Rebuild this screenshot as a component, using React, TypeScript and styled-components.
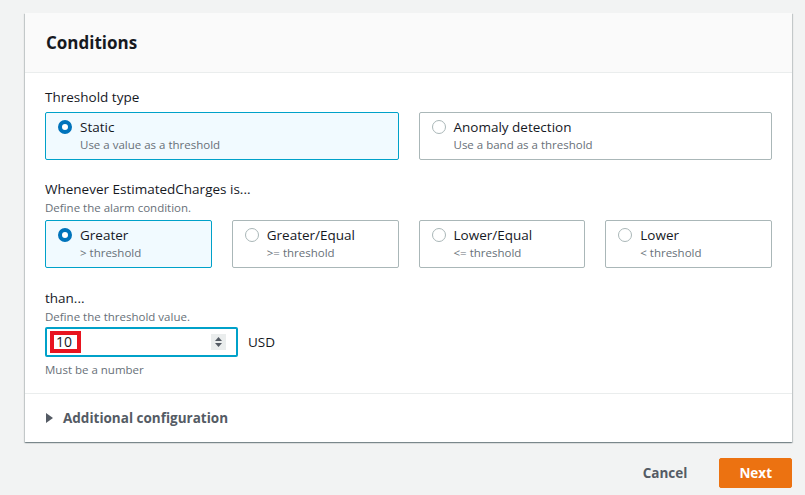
import React, { useState } from 'react';
import styled, { createGlobalStyle } from 'styled-components';

const GlobalStyle = createGlobalStyle`
  body {
    margin: 0;
    background: #f2f3f3;
    font-family: "Open Sans", "Noto Sans", sans-serif;
    color: #16191f;
  }
`;

const Page = styled.div`
  padding: 13px 13px 8px 25px;
`;

const Card = styled.div`
  background: #fff;
  box-shadow: 0 1px 1px 0 rgba(0, 28, 36, 0.3), 1px 1px 1px 0 rgba(0, 28, 36, 0.15),
    -1px 1px 1px 0 rgba(0, 28, 36, 0.15);
`;

const CardHeader = styled.div`
  height: 59px;
  display: flex;
  align-items: center;
  padding: 0 21px;
  background: #fafafa;
  border-bottom: 1px solid #eaeded;
`;

const Title = styled.h2`
  margin: 0;
  font-size: 17px;
  font-weight: 700;
`;

const CardBody = styled.div`
  padding: 13px 20px 15px;
  border-bottom: 1px solid #eaeded;
`;

const Field = styled.div<{ $gap?: number }>`
  margin-top: ${(p) => p.$gap ?? 0}px;
`;

const Label = styled.div`
  font-size: 13.5px;
  line-height: 22px;
`;

const Description = styled.div`
  font-size: 11.5px;
  line-height: 16px;
  color: #687078;
  margin-bottom: 2px;
`;

const TileGrid = styled.div<{ $cols: number }>`
  display: grid;
  grid-template-columns: repeat(${(p) => p.$cols}, 1fr);
  column-gap: 20px;
  margin-top: 4px;
`;

const Tile = styled.div<{ $selected: boolean }>`
  display: flex;
  align-items: flex-start;
  gap: 8px;
  height: 48px;
  box-sizing: border-box;
  padding: 5px 12px;
  border-radius: 2px;
  border: 1px solid ${(p) => (p.$selected ? '#00a1c9' : '#aab7b8')};
  background: ${(p) => (p.$selected ? '#f1faff' : '#fff')};
  cursor: pointer;
`;

const Radio = styled.span<{ $checked: boolean }>`
  flex: none;
  width: 14px;
  height: 14px;
  margin-top: 2px;
  box-sizing: border-box;
  border-radius: 50%;
  background: #fff;
  border: ${(p) => (p.$checked ? '4px solid #0073bb' : '1px solid #aab7b8')};
`;

const TileText = styled.div`
  display: flex;
  flex-direction: column;
`;

const TileTitle = styled.span`
  font-size: 13.5px;
  line-height: 19px;
`;

const TileSub = styled.span`
  font-size: 11.5px;
  line-height: 16px;
  color: #687078;
`;

const InputRow = styled.div`
  display: flex;
  align-items: center;
  gap: 10px;
`;

const InputBox = styled.div`
  width: 193px;
  height: 30px;
  box-sizing: border-box;
  border: 2px solid #00a1c9;
  border-radius: 2px;
  display: flex;
  align-items: center;
  padding: 0 10px 0 3px;
`;

const Highlight = styled.span`
  border: 4px solid #e8141f;
  height: 22px;
  box-sizing: border-box;
  padding: 0 5px 0 2px;
  font-size: 14px;
  line-height: 14px;
  display: flex;
  align-items: center;
`;

const Spinner = styled.span`
  margin-left: auto;
  width: 15px;
  height: 16px;
  background: #eaeded;
  display: flex;
  align-items: center;
  justify-content: center;
`;

const Unit = styled.span`
  font-size: 13.5px;
`;

const Hint = styled.div`
  font-size: 11.5px;
  line-height: 16px;
  color: #687078;
  margin-top: 5px;
`;

const Expander = styled.div`
  height: 48px;
  display: flex;
  align-items: center;
  gap: 10px;
  padding: 0 21px;
  font-size: 13.5px;
  font-weight: 700;
  color: #545b64;
  cursor: pointer;
`;

const Footer = styled.div`
  display: flex;
  justify-content: flex-end;
  align-items: center;
  gap: 11px;
  margin-top: 16px;
`;

const Button = styled.button<{ $primary?: boolean }>`
  font-family: inherit;
  font-size: 13.5px;
  font-weight: 700;
  height: 30px;
  padding: 0 ${(p) => (p.$primary ? 19 : 20)}px;
  border-radius: 2px;
  border: 1px solid ${(p) => (p.$primary ? '#ec7211' : 'transparent')};
  background: ${(p) => (p.$primary ? '#ec7211' : 'transparent')};
  color: ${(p) => (p.$primary ? '#fff' : '#545b64')};
  cursor: pointer;
`;

const thresholdTypes = [
  { id: 'static', title: 'Static', sub: 'Use a value as a threshold' },
  { id: 'anomaly', title: 'Anomaly detection', sub: 'Use a band as a threshold' },
];

const comparisons = [
  { id: 'gt', title: 'Greater', sub: '> threshold' },
  { id: 'ge', title: 'Greater/Equal', sub: '>= threshold' },
  { id: 'le', title: 'Lower/Equal', sub: '<= threshold' },
  { id: 'lt', title: 'Lower', sub: '< threshold' },
];

type Option = { id: string; title: string; sub: string };

const TileGroup = ({
  options,
  value,
  onChange,
}: {
  options: Option[];
  value: string;
  onChange: (id: string) => void;
}) => (
  <TileGrid $cols={options.length}>
    {options.map((o) => (
      <Tile key={o.id} $selected={o.id === value} onClick={() => onChange(o.id)}>
        <Radio $checked={o.id === value} />
        <TileText>
          <TileTitle>{o.title}</TileTitle>
          <TileSub>{o.sub}</TileSub>
        </TileText>
      </Tile>
    ))}
  </TileGrid>
);

export default function App() {
  const [type, setType] = useState('static');
  const [cmp, setCmp] = useState('gt');

  return (
    <Page>
      <GlobalStyle />
      <Card>
        <CardHeader>
          <Title>Conditions</Title>
        </CardHeader>
        <CardBody>
          <Field>
            <Label>Threshold type</Label>
            <TileGroup options={thresholdTypes} value={type} onChange={setType} />
          </Field>
          <Field $gap={18}>
            <Label>Whenever EstimatedCharges is...</Label>
            <Description>Define the alarm condition.</Description>
            <TileGroup options={comparisons} value={cmp} onChange={setCmp} />
          </Field>
          <Field $gap={19}>
            <Label>than...</Label>
            <Description>Define the threshold value.</Description>
            <InputRow>
              <InputBox>
                <Highlight>10</Highlight>
                <Spinner>
                  <svg width="9" height="12" viewBox="0 0 9 12">
                    <path d="M4.5 1 L8 5 H1 Z M4.5 11 L8 7 H1 Z" fill="#545b64" />
                  </svg>
                </Spinner>
              </InputBox>
              <Unit>USD</Unit>
            </InputRow>
            <Hint>Must be a number</Hint>
          </Field>
        </CardBody>
        <Expander>
          <svg width="7" height="10" viewBox="0 0 7 10">
            <path d="M0 0 L7 5 L0 10 Z" fill="#545b64" />
          </svg>
          Additional configuration
        </Expander>
      </Card>
      <Footer>
        <Button>Cancel</Button>
        <Button $primary>Next</Button>
      </Footer>
    </Page>
  );
}
